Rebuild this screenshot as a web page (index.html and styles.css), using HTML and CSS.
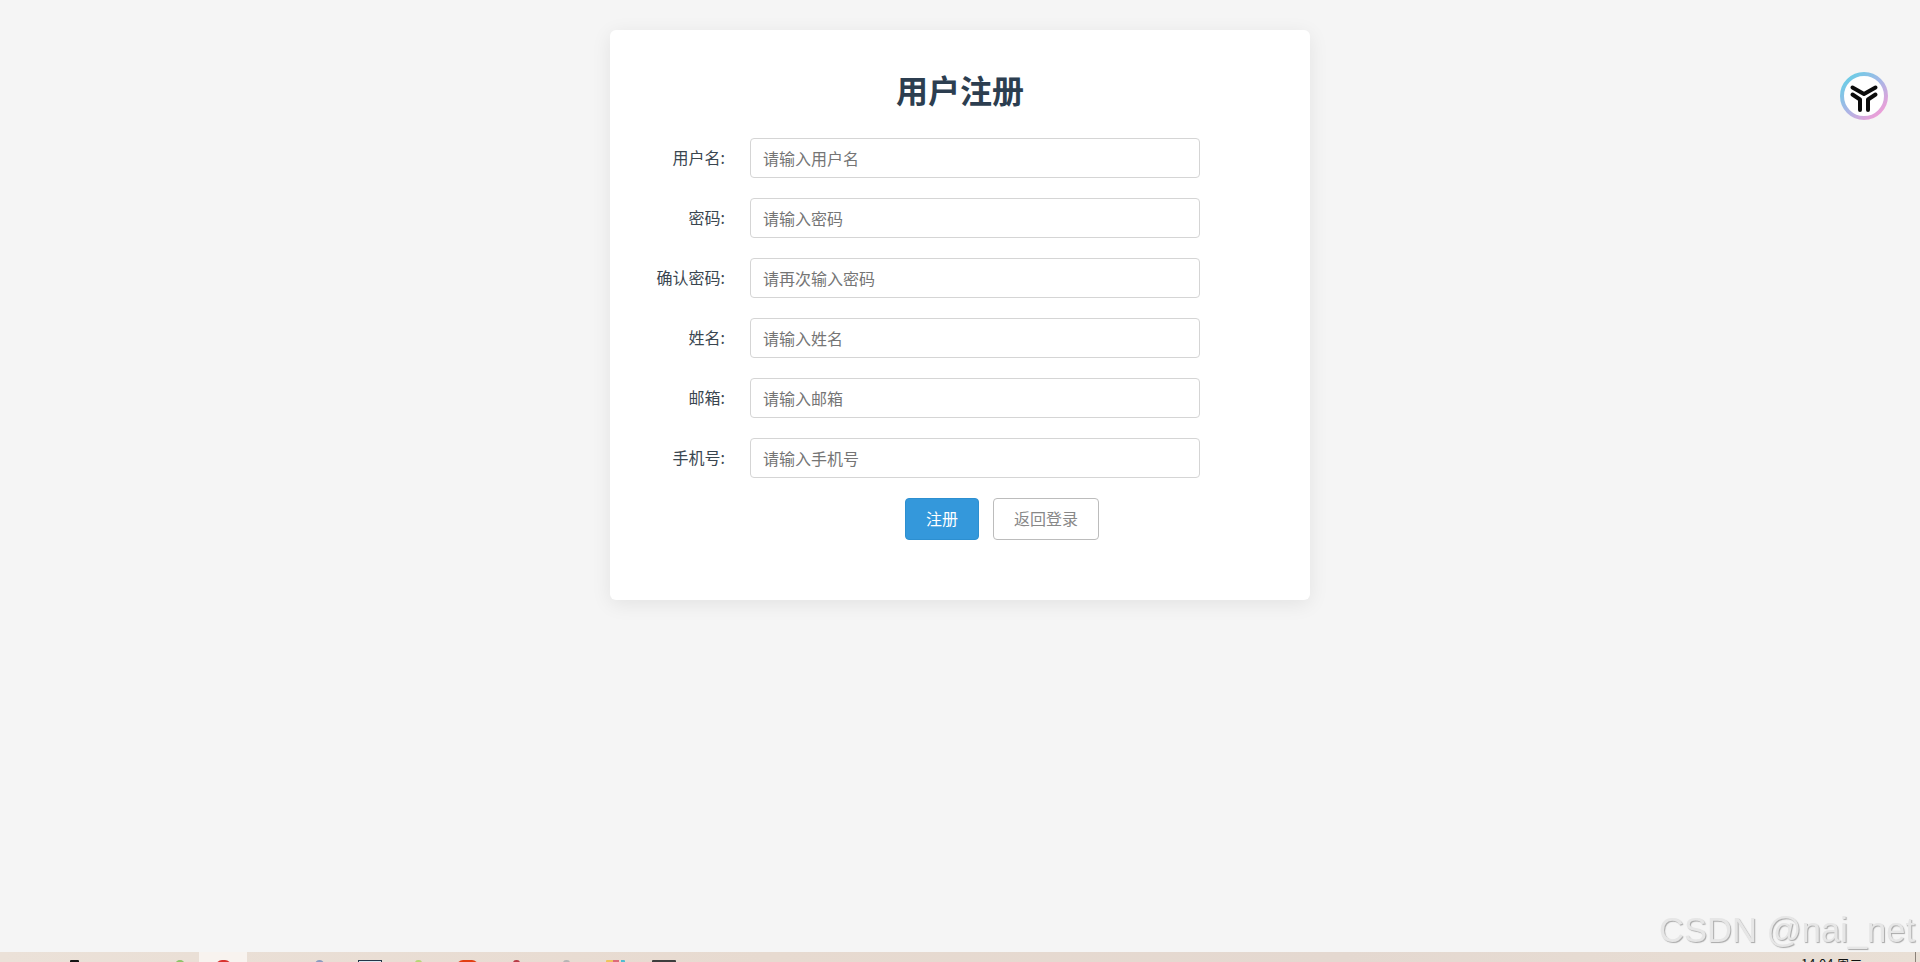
FILE: index.html
```html
<!DOCTYPE html>
<html lang="zh-CN">
<head>
<meta charset="utf-8">
<title>用户注册</title>
<link rel="stylesheet" href="styles.css">
</head>
<body>
<div class="page">
  <main class="main">
    <section class="card">
      <h1 class="title">用户注册</h1>
      <form class="form">
        <div class="row"><label class="label">用户名:</label><input class="input" type="text" placeholder="请输入用户名"></div>
        <div class="row"><label class="label">密码:</label><input class="input" type="password" placeholder="请输入密码"></div>
        <div class="row"><label class="label">确认密码:</label><input class="input" type="password" placeholder="请再次输入密码"></div>
        <div class="row"><label class="label">姓名:</label><input class="input" type="text" placeholder="请输入姓名"></div>
        <div class="row"><label class="label">邮箱:</label><input class="input" type="text" placeholder="请输入邮箱"></div>
        <div class="row"><label class="label">手机号:</label><input class="input" type="text" placeholder="请输入手机号"></div>
        <div class="actions">
          <button class="btn btn-primary" type="button">注册</button>
          <button class="btn btn-plain" type="button">返回登录</button>
        </div>
      </form>
    </section>
  </main>
  <footer class="taskbar">
    <span class="tb tb-black"></span>
    <span class="tb tb-green"></span>
    <span class="tb-active"><span class="tb tb-red"></span></span>
    <span class="tb tb-blue"></span>
    <span class="tb tb-box"></span>
    <span class="tb tb-lime"></span>
    <span class="tb tb-orange"></span>
    <span class="tb tb-crimson"></span>
    <span class="tb tb-gray"></span>
    <span class="tb tb-multi"></span>
    <span class="tb tb-dark"></span>
    <span class="clock">14:04 周二</span>
    <span class="tb-sep"></span>
  </footer>
</div>
<svg class="float-logo" width="48" height="48" viewBox="0 0 48 48" aria-hidden="true">
  <defs>
    <linearGradient id="ring" x1="0.15" y1="0.1" x2="0.85" y2="0.9">
      <stop offset="0" stop-color="#6fcbe6"/>
      <stop offset="0.5" stop-color="#a9b6e6"/>
      <stop offset="1" stop-color="#eb9fd8"/>
    </linearGradient>
  </defs>
  <circle cx="24" cy="24" r="22" fill="#fff" stroke="url(#ring)" stroke-width="4"/>
  <path d="M12.500 15.500 24 22l11.500-6.500M12.500 22.500 20 27.500V38M35.500 22.500 28 27.500V38" fill="none" stroke="#0b0b0b" stroke-width="4" stroke-linecap="round" stroke-linejoin="round"/>
</svg>
<div class="watermark">CSDN @nai_net</div>
</body>
</html>
```

FILE: styles.css
```css
* { box-sizing: border-box; }
html, body { margin: 0; padding: 0; height: 100%; overflow: hidden; }
body {
  background: #f5f5f5;
  font-family: "Noto Sans CJK SC", "Liberation Sans", sans-serif;
  color: #2c3e50;
}
.page { display: flex; flex-direction: column; height: 962px; }
.main { flex: 1; padding-top: 30px; }
.card {
  width: 700px;
  height: 570px;
  margin: 0 auto;
  padding: 38px 40px 40px;
  background: #fff;
  border-radius: 6px;
  box-shadow: 0 4px 20px rgba(0, 0, 0, 0.08);
}
.title {
  margin: 0 0 28px;
  font-size: 32px;
  line-height: 42px;
  font-weight: 700;
  text-align: center;
  color: #2c3e50;
}
.form { display: flex; flex-direction: column; gap: 20px; }
.row { display: flex; align-items: center; }
.label {
  width: 80px;
  margin-right: 20px;
  padding: 0 5px 2px 0;
  text-align: right;
  white-space: nowrap;
  font-size: 16px;
  color: #3a4650;
}
.input {
  width: 450px;
  height: 40px;
  padding: 0 12px;
  border: 1px solid #d5d5d5;
  border-radius: 4px;
  background: #fff;
  font: 16px "Noto Sans CJK SC", "Liberation Sans", sans-serif;
  color: #333;
  outline: none;
}
.input::placeholder { color: #757575; opacity: 1; }
.actions { display: flex; justify-content: center; gap: 14px; padding-left: 84px; }
.btn {
  height: 42px;
  padding: 0 20px 2px;
  border-radius: 4px;
  font: 16px "Noto Sans CJK SC", "Liberation Sans", sans-serif;
  cursor: pointer;
}
.btn-primary { background: #3498db; border: 1px solid #2d8fd0; color: #fff; }
.btn-plain { background: #fff; border: 1px solid #bcbcbc; color: #888; }
.taskbar {
  position: relative;
  flex: none;
  height: 10px;
  overflow: hidden;
  background: linear-gradient(90deg, #ebe1d8 0%, #e7dad0 40%, #e4d8d0 70%, #e9dfd5 100%);
}
.tb { position: absolute; top: 8px; height: 12px; border-radius: 3px; }
.tb-active { position: absolute; left: 199px; top: 0; width: 48px; height: 10px; background: #f8f3ef; }
.tb-black { left: 70px; width: 9px; background: #151515; border-radius: 1px; }
.tb-green { left: 175px; width: 10px; background: #8fc36a; border-radius: 5px; }
.tb-red { left: 17px; width: 15px; background: #d8332e; border-radius: 8px; }
.tb-blue { left: 315px; width: 9px; background: #8b9cc0; border-radius: 5px; }
.tb-box { left: 358px; width: 24px; background: #dfe8f0; border: 1px solid #233548; border-radius: 0; }
.tb-lime { left: 415px; width: 7px; background: #b7d676; }
.tb-orange { left: 457px; width: 21px; background: #e23f12; border-radius: 6px; }
.tb-crimson { left: 513px; width: 7px; background: #b73a45; }
.tb-gray { left: 563px; width: 7px; background: #b5b5b5; }
.tb-multi {
  left: 606px;
  width: 19px;
  border-radius: 1px;
  background: linear-gradient(90deg, #efc45e 0 35%, #dd6a78 35% 70%, #e7dad0 70% 78%, #4fbcd0 78%);
}
.tb-dark { left: 652px; width: 24px; background: #3d3d3d; border-radius: 1px; }
.clock {
  position: absolute;
  left: 1801px;
  top: 4px;
  font: 13px/16px "Noto Sans CJK SC", "Liberation Sans", sans-serif;
  color: #111;
  white-space: nowrap;
}
.tb-sep { position: absolute; left: 1915px; top: 0; width: 1px; height: 10px; background: #8a8178; }
.float-logo { position: fixed; left: 1840px; top: 72px; }
.watermark {
  position: fixed;
  left: 1659px;
  top: 910px;
  font: 34.600px/40px "Liberation Sans", sans-serif;
  color: #e6e6e6;
  text-shadow: 1px 1px 1px #a8a8a8;
  white-space: nowrap;
}
```
